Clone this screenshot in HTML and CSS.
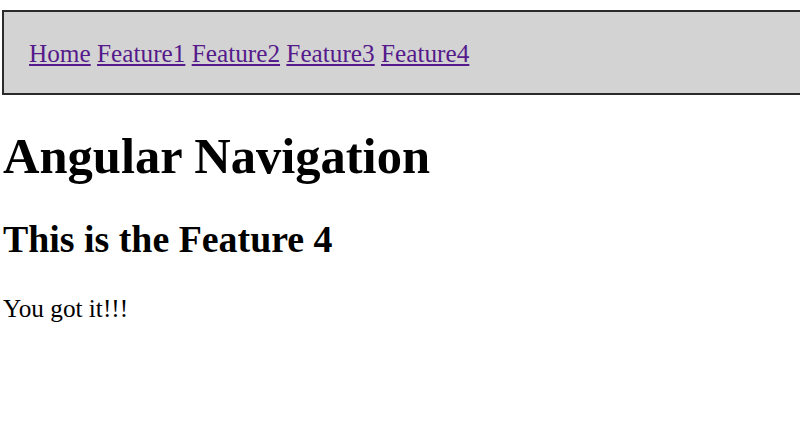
FILE: index.html
```html
<!DOCTYPE html>
<html>
<head>
<meta charset="utf-8">
<link rel="stylesheet" href="styles.css">
</head>
<body>
<div class="page">
  <nav class="topnav">
    <a href="#">Home</a>
    <a href="#">Feature1</a>
    <a href="#">Feature2</a>
    <a href="#">Feature3</a>
    <a href="#">Feature4</a>
  </nav>
  <h1 class="title">Angular Navigation</h1>
  <h2 class="subtitle">This is the Feature 4</h2>
  <p class="text">You got it!!!</p>
</div>
</body>
</html>
```
FILE: styles.css
```css
html, body {
  margin: 0;
  padding: 0;
  background: #ffffff;
}
.page {
  font-family: "Liberation Serif", "Times New Roman", serif;
  font-size: 25.25px;
  color: #000000;
  padding: 10px 0 0 3px;
}
.topnav {
  margin-left: -1px;
  margin-right: -20px;
  background: #d3d3d3;
  border: 2px solid #2a2a2a;
  height: 85px;
  box-sizing: border-box;
  padding: 26.5px 0 0 25px;
  line-height: 1.15;
}
.topnav a {
  color: #551a8b;
  text-decoration: underline;
}
.title {
  font-size: 2em;
  font-weight: bold;
  margin: 32px 0 0 0;
  line-height: 1.15;
}
.subtitle {
  font-size: 1.5em;
  font-weight: bold;
  margin: 33.4px 0 0 0;
  line-height: 1.15;
}
.text {
  margin: 32px 0 0 0;
  line-height: 1.15;
}
```
